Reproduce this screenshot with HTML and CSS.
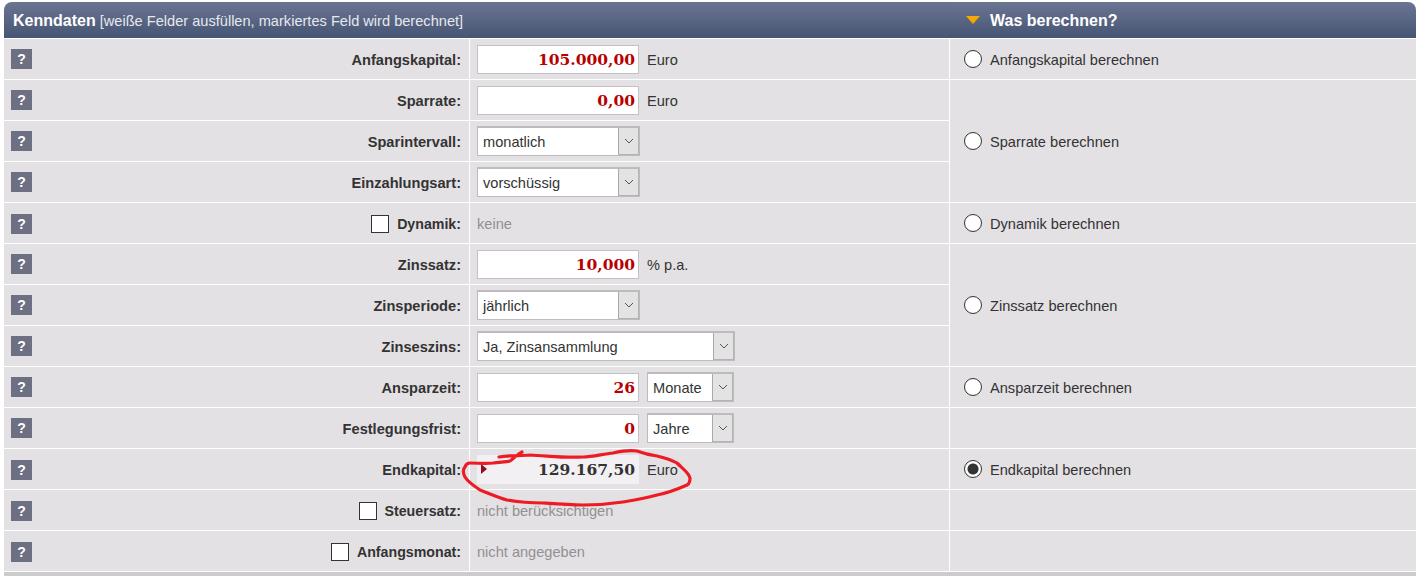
FILE: index.html
```
<!DOCTYPE html>
<html lang="de">
<head>
<meta charset="utf-8">
<title>Kenndaten</title>
<link rel="stylesheet" href="styles.css">
</head>
<body>
<table class="calc">
<colgroup><col class="col-label"><col class="col-field"><col class="col-target"></colgroup>
<thead>
<tr>
<th class="head-main" colspan="2"><b>Kenndaten</b> [weiße Felder ausfüllen, markiertes Feld wird berechnet]</th>
<th class="head-side"><span class="head-side-in"><span class="tri-down"></span><b>Was berechnen?</b></span></th>
</tr>
</thead>
<tbody>
<tr>
<td class="label"><div class="label-in"><span class="help">?</span><span class="name">Anfangskapital:</span></div></td>
<td class="field"><div class="field-in"><input class="num" type="text" value="105.000,00"><span class="unit">Euro</span></div></td>
<td class="target"><label class="choice"><input type="radio" name="t"><span>Anfangskapital berechnen</span></label></td>
</tr>
<tr>
<td class="label"><div class="label-in"><span class="help">?</span><span class="name">Sparrate:</span></div></td>
<td class="field"><div class="field-in"><input class="num" type="text" value="0,00"><span class="unit">Euro</span></div></td>
<td class="target" rowspan="3"><label class="choice"><input type="radio" name="t"><span>Sparrate berechnen</span></label></td>
</tr>
<tr>
<td class="label"><div class="label-in"><span class="help">?</span><span class="name">Sparintervall:</span></div></td>
<td class="field"><div class="field-in"><div class="select sel-m"><span class="sel-text">monatlich</span><span class="sel-btn"><svg width="10" height="6" viewBox="0 0 10 6"><path d="M1 1l4 4 4-4" fill="none" stroke="#555" stroke-width="1"/></svg></span></div></div></td>
</tr>
<tr>
<td class="label"><div class="label-in"><span class="help">?</span><span class="name">Einzahlungsart:</span></div></td>
<td class="field"><div class="field-in"><div class="select sel-m"><span class="sel-text">vorschüssig</span><span class="sel-btn"><svg width="10" height="6" viewBox="0 0 10 6"><path d="M1 1l4 4 4-4" fill="none" stroke="#555" stroke-width="1"/></svg></span></div></div></td>
</tr>
<tr>
<td class="label low"><div class="label-in"><span class="help">?</span><input class="check" type="checkbox"><span class="name">Dynamik:</span></div></td>
<td class="field"><div class="field-in"><span class="note">keine</span></div></td>
<td class="target"><label class="choice"><input type="radio" name="t"><span>Dynamik berechnen</span></label></td>
</tr>
<tr>
<td class="label"><div class="label-in"><span class="help">?</span><span class="name">Zinssatz:</span></div></td>
<td class="field"><div class="field-in"><input class="num" type="text" value="10,000"><span class="unit">% p.a.</span></div></td>
<td class="target" rowspan="3"><label class="choice"><input type="radio" name="t"><span>Zinssatz berechnen</span></label></td>
</tr>
<tr>
<td class="label"><div class="label-in"><span class="help">?</span><span class="name">Zinsperiode:</span></div></td>
<td class="field"><div class="field-in"><div class="select sel-m"><span class="sel-text">jährlich</span><span class="sel-btn"><svg width="10" height="6" viewBox="0 0 10 6"><path d="M1 1l4 4 4-4" fill="none" stroke="#555" stroke-width="1"/></svg></span></div></div></td>
</tr>
<tr>
<td class="label"><div class="label-in"><span class="help">?</span><span class="name">Zinseszins:</span></div></td>
<td class="field"><div class="field-in"><div class="select sel-l"><span class="sel-text">Ja, Zinsansammlung</span><span class="sel-btn"><svg width="10" height="6" viewBox="0 0 10 6"><path d="M1 1l4 4 4-4" fill="none" stroke="#555" stroke-width="1"/></svg></span></div></div></td>
</tr>
<tr>
<td class="label"><div class="label-in"><span class="help">?</span><span class="name">Ansparzeit:</span></div></td>
<td class="field"><div class="field-in"><input class="num" type="text" value="26"><div class="select sel-s"><span class="sel-text">Monate</span><span class="sel-btn"><svg width="10" height="6" viewBox="0 0 10 6"><path d="M1 1l4 4 4-4" fill="none" stroke="#555" stroke-width="1"/></svg></span></div></div></td>
<td class="target"><label class="choice"><input type="radio" name="t"><span>Ansparzeit berechnen</span></label></td>
</tr>
<tr>
<td class="label"><div class="label-in"><span class="help">?</span><span class="name">Festlegungsfrist:</span></div></td>
<td class="field"><div class="field-in"><input class="num" type="text" value="0"><div class="select sel-s"><span class="sel-text">Jahre</span><span class="sel-btn"><svg width="10" height="6" viewBox="0 0 10 6"><path d="M1 1l4 4 4-4" fill="none" stroke="#555" stroke-width="1"/></svg></span></div></div></td>
<td class="target"></td>
</tr>
<tr>
<td class="label low"><div class="label-in"><span class="help">?</span><span class="name">Endkapital:</span></div></td>
<td class="field"><div class="field-in"><div class="result"><span class="tri-right"></span>129.167,50</div><span class="unit">Euro</span></div></td>
<td class="target"><label class="choice"><input type="radio" name="t" checked><span>Endkapital berechnen</span></label></td>
</tr>
<tr>
<td class="label low"><div class="label-in"><span class="help">?</span><input class="check" type="checkbox"><span class="name">Steuersatz:</span></div></td>
<td class="field"><div class="field-in"><span class="note">nicht berücksichtigen</span></div></td>
<td class="target"></td>
</tr>
<tr>
<td class="label low"><div class="label-in"><span class="help">?</span><input class="check" type="checkbox"><span class="name">Anfangsmonat:</span></div></td>
<td class="field"><div class="field-in"><span class="note">nicht angegeben</span></div></td>
<td class="target"></td>
</tr>
</tbody>
</table>
<div class="foot"></div>
<svg class="scribble" width="1416" height="576" viewBox="0 0 1416 576">
<path d="M499 457 C510 455 520 456 530 455 C550 456 565 458 583 457 C592 457 603 454 613 453 C622 451 630 450 637 451 C645 454 650 455 657 456 C665 458 672 460 677 463 C683 469 689 473 690 478 C690 481 689 484 687 485 C678 489 667 493 657 495 C646 498 635 500 623 502 C610 504 597 505 583 505 C570 505 557 504 543 503 C530 503 518 502 507 500 C497 497 488 493 480 490 C474 486 468 482 465 477 C463 473 463 469 465 467 C466 464 468 463 470 463 C478 463 486 464 493 463 C499 462 505 462 510 461 C514 458 518 454 522 452" fill="none" stroke="#ed1c24" stroke-width="3.2" stroke-linecap="round" stroke-linejoin="round"/>
</svg>
</body>
</html>
```

FILE: styles.css
```
* { box-sizing: border-box; }
html, body { margin: 0; padding: 0; background: #fff; }
body {
  position: relative;
  padding-top: 2px;
  height: 576px;
  overflow: hidden;
  font-family: "Liberation Sans", Arial, sans-serif;
  font-size: 14.6px;
  color: #333;
}
.calc {
  width: 1412px;
  margin-left: 4px;
  table-layout: fixed;
  border-collapse: separate;
  border-spacing: 0;
}
.col-label { width: 466px; }
.col-field { width: 480px; }
.col-target { width: 466px; }

thead tr { height: 37px; }
th {
  padding: 2px 0 0;
  height: 37px;
  border-bottom: 1px solid #fff;
  background: linear-gradient(#6a7592, #465574);
  color: #fff;
  font-weight: normal;
  text-align: left;
}
.head-main { padding-left: 9px; border-top-left-radius: 8px; color: #e6e8ee; }
.head-main b { color: #fff; font-size: 16px; }
.head-side { border-top-right-radius: 8px; padding-left: 16px; }
.head-side-in { display: flex; align-items: center; gap: 10px; font-size: 16px; }
.tri-down {
  width: 0;
  height: 0;
  margin-top: -2px;
  border-left: 7px solid transparent;
  border-right: 7px solid transparent;
  border-top: 8px solid #f5a800;
}

tbody tr { height: 41px; }
td {
  padding: 0;
  height: 41px;
  background: #e3e1e4;
  border-bottom: 1px solid #fff;
}
.label, .field { border-right: 1px solid #fff; }
.label-in { display: flex; align-items: center; padding: 0 8px 0 7px; }
.low .label-in { padding-top: 2px; }
.help {
  width: 21px;
  height: 20px;
  margin-right: auto;
  background: #6c7082;
  color: #fff;
  font-weight: bold;
  font-size: 14px;
  line-height: 20px;
  text-align: center;
}
.name { font-weight: bold; padding-top: 2px; }
.low .name { padding-top: 0; }
.check + .name { font-size: 14.2px; }
.check {
  appearance: none;
  width: 18px;
  height: 18px;
  margin: 0 8px 0 0;
  background: #fff;
  border: 1px solid #333;
}
.field-in { display: flex; align-items: center; gap: 8px; padding-left: 7px; }
.num {
  width: 162px;
  height: 29px;
  padding: 1px 3px 0 0;
  border: 1px solid #c3c1c4;
  background: #fff;
  color: #b80000;
  font-family: "DejaVu Serif", serif;
  font-weight: bold;
  font-size: 15.5px;
  text-align: right;
  outline: none;
}
.unit, .note { padding-top: 2px; }
.note { color: #929092; }
.select {
  display: flex;
  height: 30px;
  border: 1px solid #bdbbbe;
  border-top-width: 2px;
  background: #fff;
  line-height: 29px;
}
.sel-m { width: 163px; }
.sel-l { width: 258px; }
.sel-s { width: 87px; }
.sel-text { flex: 1; padding-left: 5px; }
.sel-btn {
  display: flex;
  align-items: center;
  justify-content: center;
  width: 21px;
  background: #e3e3e3;
  border-left: 1px solid #a9a9a9;
  border-right: 1px solid #b4b2b5;
  border-bottom: 1px solid #b4b2b5;
}
.result {
  position: relative;
  width: 162px;
  height: 29px;
  padding-right: 4px;
  background: #f2f0f3;
  color: #333;
  font-family: "DejaVu Serif", serif;
  font-weight: bold;
  font-size: 15.5px;
  line-height: 30px;
  text-align: right;
}
.tri-right {
  position: absolute;
  left: 4px;
  top: 9px;
  width: 0;
  height: 0;
  border-top: 5px solid transparent;
  border-bottom: 5px solid transparent;
  border-left: 6px solid #8e0e1e;
}
.choice { display: flex; align-items: center; gap: 8px; padding-left: 14px; }
.choice span { padding-top: 2px; }
.choice input {
  appearance: none;
  flex: none;
  width: 18px;
  height: 18px;
  margin: 0;
  border: 1px solid #333;
  border-radius: 50%;
  background: #fff;
}
.choice input:checked { background: radial-gradient(circle, #333 0, #333 5px, #fff 6px); }
.foot { height: 4px; background: #ccc; margin-left: 4px; }
.scribble { position: absolute; left: 0; top: 0; pointer-events: none; }
```
